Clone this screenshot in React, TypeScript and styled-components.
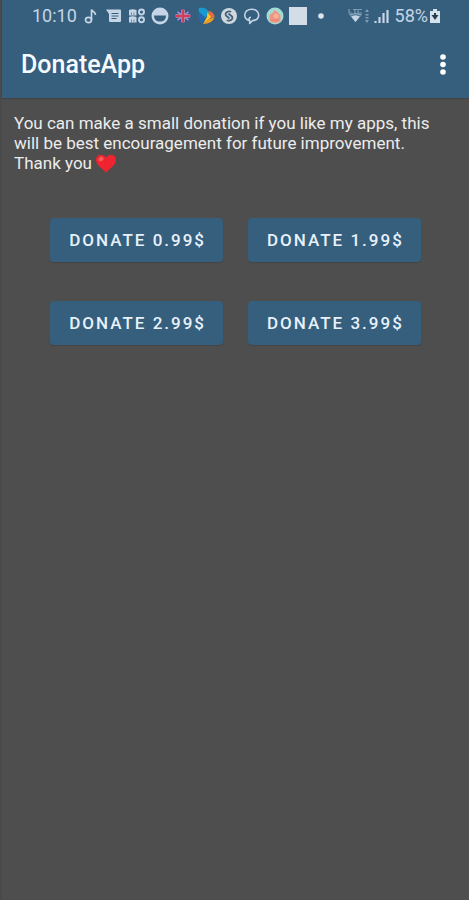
import React from "react";
import styled, { createGlobalStyle } from "styled-components";

const GlobalStyle = createGlobalStyle`
  * { box-sizing: border-box; }
  body { margin: 0; background: #4e4e4e; }
`;

const Screen = styled.div`
  min-height: 100vh;
  border-left: 2px solid #484a4c;
  background: #4e4e4e;
  font-family: Roboto, sans-serif;
`;

const Top = styled.header`
  background: #355f7d;
  box-shadow: 0 1px 1px rgba(0, 0, 0, 0.12);
`;

const StatusBar = styled.div`
  display: flex;
  align-items: center;
  justify-content: space-between;
  height: 32px;
  padding: 0 28px 0 30px;
  color: #c5d5e6;
  font-size: 18px;
  line-height: 32px;
`;

const StatusGroup = styled.div<{ $gap: number }>`
  display: flex;
  align-items: center;
  gap: ${(p) => p.$gap}px;
`;

const Icon = styled.svg`
  display: block;
  flex: none;
`;

const AppBar = styled.div`
  display: flex;
  align-items: center;
  justify-content: space-between;
  height: 66px;
  padding: 0 10px 0 19px;
`;

const Title = styled.h1`
  margin: 0;
  color: #f5faff;
  font-size: 25px;
  font-weight: 500;
  line-height: 32px;
`;

const MenuButton = styled.button`
  display: grid;
  place-items: center;
  width: 32px;
  height: 40px;
  padding: 0;
  border: 0;
  background: none;
  cursor: pointer;
`;

const Message = styled.p`
  margin: 0;
  padding: 15px 20px 0 12px;
  color: #ececec;
  font-size: 17px;
  line-height: 20px;
`;

const Heart = styled.svg`
  display: inline-block;
  vertical-align: -4px;
`;

const Donations = styled.main`
  display: grid;
  grid-template-columns: repeat(2, max-content);
  justify-content: center;
  gap: 39px 25px;
  padding: 45px 0;
`;

const DonateButton = styled.button`
  height: 44px;
  padding: 0 17px 0 19px;
  border: 0;
  border-radius: 4px;
  background: #355f7d;
  box-shadow: 0 1px 1px rgba(0, 0, 0, 0.12);
  color: #e8f1fa;
  font-family: inherit;
  font-size: 17px;
  font-weight: 500;
  letter-spacing: 2px;
  text-transform: uppercase;
  cursor: pointer;
`;

const ink = "#c5d5e6";

const slot = { width: 18, height: 18, viewBox: "0 0 18 18", "aria-hidden": true };

const NotificationIcons = () => (
  <>
    <Icon {...slot}>
      <ellipse cx="6.5" cy="13" rx="3" ry="2.6" fill="none" stroke={ink} strokeWidth="1.7" />
      <path d="M9.5 13V2.5c.5 2.3 4.200 2 4 5.500" fill="none" stroke={ink} strokeWidth="1.7" />
    </Icon>
    <Icon {...slot}>
      <path d="M1 2.500H15q1 0 1 1v10.500q0 1-1 1H5q-1 0-1-1V7Z" fill={ink} />
      <path d="M6.500 6.500h7M6.500 9h7M6.500 11.500h5" stroke="#355f7d" strokeWidth="1" />
    </Icon>
    <Icon {...slot}>
      <path d="M1 8.500V3q3.500-1.500 7.500 0v5.500ZM1 15.500V10q3.500-1.500 7.500 0v5.500Z" fill={ink} />
      <path d="M3.500 5.500v2.500M6 5.500v2.500M3.500 12.500V15M6 12.500V15" stroke="#6f91aa" strokeWidth="1" />
      <circle cx="13.500" cy="5" r="2.500" fill="none" stroke={ink} strokeWidth="1.900" />
      <circle cx="13.500" cy="12.800" r="2.500" fill="none" stroke={ink} strokeWidth="1.900" />
    </Icon>
    <Icon {...slot}>
      <circle cx="9" cy="9" r="8.500" fill={ink} />
      <path d="M3 8.500h12q0 6-6 6t-6-6Z" fill="#355f7d" />
    </Icon>
    <Icon {...slot}>
      <clipPath id="flag"><ellipse cx="9" cy="9" rx="7.500" ry="6.500" /></clipPath>
      <g clipPath="url(#flag)">
        <path d="M0 0h18v18H0Z" fill="#34549b" />
        <path d="m1 3 16 12M17 3 1 15" stroke="#a994c0" strokeWidth="1.500" />
        <path d="M0 9h18M9 0v18" stroke="#b9a5c4" strokeWidth="3.600" />
        <path d="M0 9h18M9 0v18" stroke="#cf4058" strokeWidth="2.400" />
      </g>
    </Icon>
    <Icon {...slot}>
      <path d="M2 1c5-1 9 1 10 5L8 11 5 9C2 7 1 4 2 1Z" fill="#159bd1" />
      <path d="M2 5 8 10 5 16Q0 12 2 5Z" fill="#2468b3" />
      <path d="M11 4c4 0 6.500 3 6.500 6L13 11c0-3-1-5-2-7Z" fill="#ef6a3a" />
      <path d="m10.500 5 3.500 5-3 3-5 4 4-7Z" fill="#f7c92c" />
      <path d="M17.500 10q-2 7-11.500 7l6-5Z" fill="#f09a28" />
    </Icon>
    <Icon {...slot}>
      <circle cx="9" cy="9" r="8" fill="#ced8e1" />
      <path d="M10.500 4.500C7 3.500 4 7 6.500 9l2.500 2M7.500 13.500c3.500 1 6.500-2.500 4-4.500L9 7" fill="none" stroke="#466177" strokeWidth="1.800" strokeLinecap="round" />
    </Icon>
    <Icon {...slot}>
      <path d="M6.500 13.500C3 12.700 1.700 10.500 1.700 8c0-3.300 3-5.800 7-5.800s7 2.500 7 5.800-2.700 5.300-6 5.500l-3 3v-3C5.500 11.500 6 10.500 8 10.200" fill="none" stroke={ink} strokeWidth="1.600" strokeLinejoin="round" />
    </Icon>
    <Icon {...slot}>
      <circle cx="9" cy="9" r="8.500" fill="#a2ddd5" />
      <path d="M3.500 14V8l3-2 2-3 3 2 3 3v6q-5.500 4-11 0Z" fill="#ef9683" />
      <circle cx="10" cy="9" r="2.500" fill="#f4b299" />
      <path d="M5 12.500q4 2 8 0" fill="none" stroke="#e57e7c" />
    </Icon>
    <Icon {...slot}>
      <path d="M0 0h18v18H0Z" fill="#d3dde7" />
    </Icon>
    <Icon {...slot}>
      <circle cx="9" cy="9" r="2.800" fill="#dbe6f0" />
    </Icon>
  </>
);

const NetworkIcons = () => (
  <Icon width="42" height="18" viewBox="0 0 42 18" aria-hidden="true">
    <path d="M1 2v4h3M5 2.500h4M7 2.500V6M14 2.500h-4V6h4" fill="none" stroke="#7f9db5" strokeWidth="1.200" />
    <path d="M1 7.500q6.500-3 13 0L7.500 15Z" fill="#8dabc0" />
    <path d="m3.500 9.500 4 5.500 4-5.500q-4-2-8 0Z" fill={ink} />
    <path d="M2 9q5.500-3 11 0" fill="none" stroke="#4d7591" strokeWidth="1" />
    <path d="m17 5 2-3 2 3ZM17 13l2 3 2-3ZM17.500 7h3v1.500h-3ZM17.500 10h3v1.500h-3Z" fill="#7f9db5" />
    <path d="M27.500 16v-2M31.500 16v-6M35.500 16V6M39.500 16V3" stroke={ink} strokeWidth="2.200" />
  </Icon>
);

const BatteryIcon = () => (
  <Icon width="12" height="18" viewBox="0 0 12 18" aria-hidden="true">
    <path d="M4 2h4v2h3v12H1V4h3Z" fill="#d6e1eb" />
    <path d="M2.500 8h7L6 13Z" fill="#263d50" />
    <path d="M5 6h2v3H5Z" fill="#263d50" />
  </Icon>
);

const prices = ["0.99$", "1.99$", "2.99$", "3.99$"];

export default function App() {
  return (
    <Screen>
      <GlobalStyle />
      <Top>
        <StatusBar>
          <StatusGroup $gap={5}>
            <time>10:10</time>
            <NotificationIcons />
          </StatusGroup>
          <StatusGroup $gap={5}>
            <NetworkIcons />
            <StatusGroup $gap={1}>
              <span>58%</span>
              <BatteryIcon />
            </StatusGroup>
          </StatusGroup>
        </StatusBar>
        <AppBar>
          <Title>DonateApp</Title>
          <MenuButton aria-label="More options">
            <Icon width="6" height="22" viewBox="0 0 6 22" aria-hidden="true">
              <circle cx="3" cy="3" r="2.800" fill="#fff" />
              <circle cx="3" cy="10.500" r="2.800" fill="#fff" />
              <circle cx="3" cy="18" r="2.800" fill="#fff" />
            </Icon>
          </MenuButton>
        </AppBar>
      </Top>
      <Message>
        You can make a small donation if you like my apps, this will be best
        encouragement for future improvement. Thank you{" "}
        <Heart width="20" height="19" viewBox="0 0 20 19" role="img" aria-label="Red heart">
          <path d="M10 19C8 15 0 12 0 6 0 0 7-1 10 3.500 13-1 20 0 20 6c0 6-8 9-10 13Z" fill="#ee2430" />
          <ellipse cx="5" cy="5" rx="2.800" ry="2.200" fill="#f65a5c" transform="rotate(-35 5 5)" />
        </Heart>
      </Message>
      <Donations>
        {prices.map((price) => (
          <DonateButton key={price} type="button">
            Donate {price}
          </DonateButton>
        ))}
      </Donations>
    </Screen>
  );
}
